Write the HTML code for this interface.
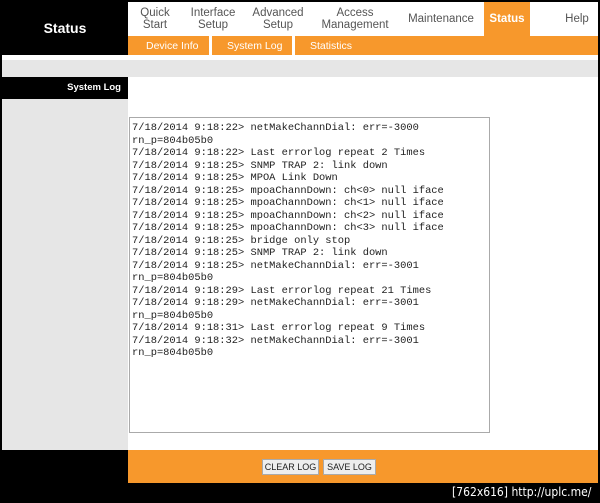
<!DOCTYPE html>
<html><head><meta charset="utf-8"><style>
*{margin:0;padding:0;box-sizing:border-box}
body{width:600px;height:503px;background:#000;position:relative;overflow:hidden;font-family:"Liberation Sans",sans-serif}
.a{position:absolute}
.nav{font-size:11.5px;color:#555;text-align:center;line-height:12px}
.sub{font-size:10.5px;color:#fff;top:40px}
pre{font-family:"Liberation Mono",monospace;font-size:10.4px;line-height:12.5px;color:#222}
.btn{background:#eee;border:1px solid #aaa;font-size:9px;color:#222;height:16px;line-height:14px;text-align:center;top:459px}
</style></head><body>
<div class="a" style="left:2px;top:2px;width:596px;height:481px;background:#fff"></div>
<div class="a" style="left:2px;top:2px;width:126px;height:53px;background:#000;color:#fff;font-weight:bold;font-size:14px;text-align:center;line-height:53px">Status</div>
<div class="a" style="left:128px;top:36px;width:470px;height:19px;background:#f7982c"></div>
<div class="a" style="left:484px;top:2px;width:46px;height:34px;background:#f7982c"></div>
<div class="a" style="left:209px;top:36px;width:3px;height:19px;background:#fff"></div>
<div class="a" style="left:292px;top:36px;width:3px;height:19px;background:#fff"></div>
<div class="a nav" style="left:136px;top:7px;width:38px">Quick<br>Start</div>
<div class="a nav" style="left:186px;top:7px;width:54px">Interface<br>Setup</div>
<div class="a nav" style="left:249px;top:7px;width:58px">Advanced<br>Setup</div>
<div class="a nav" style="left:318px;top:7px;width:74px">Access<br>Management</div>
<div class="a nav" style="left:406px;top:13px;width:70px">Maintenance</div>
<div class="a nav" style="left:484px;top:13px;width:46px;color:#fff;font-weight:bold">Status</div>
<div class="a nav" style="left:562px;top:13px;width:30px">Help</div>
<div class="a sub" style="left:146px">Device Info</div>
<div class="a sub" style="left:227px">System Log</div>
<div class="a sub" style="left:310px">Statistics</div>
<div class="a" style="left:2px;top:60px;width:596px;height:17px;background:#e6e6e6"></div>
<div class="a" style="left:2px;top:77px;width:126px;height:22px;background:#000;color:#fff;font-size:9.5px;font-weight:bold;text-align:right;padding-right:7px;line-height:22px">System Log</div>
<div class="a" style="left:2px;top:99px;width:126px;height:351px;background:#e6e6e6"></div>
<div class="a" style="left:129px;top:117px;width:361px;height:316px;border:1px solid #aaa;background:#fff;padding:4px 2px">
<pre>7/18/2014 9:18:22&gt; netMakeChannDial: err=-3000
rn_p=804b05b0
7/18/2014 9:18:22&gt; Last errorlog repeat 2 Times
7/18/2014 9:18:25&gt; SNMP TRAP 2: link down
7/18/2014 9:18:25&gt; MPOA Link Down
7/18/2014 9:18:25&gt; mpoaChannDown: ch&lt;0&gt; null iface
7/18/2014 9:18:25&gt; mpoaChannDown: ch&lt;1&gt; null iface
7/18/2014 9:18:25&gt; mpoaChannDown: ch&lt;2&gt; null iface
7/18/2014 9:18:25&gt; mpoaChannDown: ch&lt;3&gt; null iface
7/18/2014 9:18:25&gt; bridge only stop
7/18/2014 9:18:25&gt; SNMP TRAP 2: link down
7/18/2014 9:18:25&gt; netMakeChannDial: err=-3001
rn_p=804b05b0
7/18/2014 9:18:29&gt; Last errorlog repeat 21 Times
7/18/2014 9:18:29&gt; netMakeChannDial: err=-3001
rn_p=804b05b0
7/18/2014 9:18:31&gt; Last errorlog repeat 9 Times
7/18/2014 9:18:32&gt; netMakeChannDial: err=-3001
rn_p=804b05b0</pre></div>
<div class="a" style="left:2px;top:450px;width:126px;height:33px;background:#000"></div>
<div class="a" style="left:128px;top:450px;width:470px;height:33px;background:#f7982c"></div>
<div class="a btn" style="left:262px;width:57px">CLEAR LOG</div>
<div class="a btn" style="left:323px;width:53px">SAVE LOG</div>
<div class="a" style="left:452px;top:485px;color:#fff;font-size:12px;font-family:'DejaVu Sans Condensed','Liberation Sans',sans-serif">[762x616] http://uplc.me/</div>
</body></html>
